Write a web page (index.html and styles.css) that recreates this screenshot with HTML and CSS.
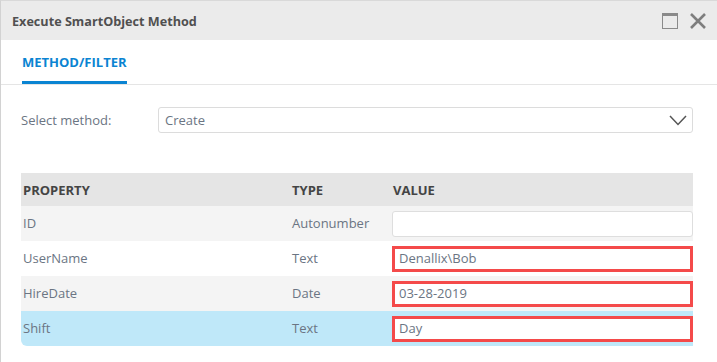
FILE: index.html
```html
<!DOCTYPE html>
<html lang="en">
<head>
    <meta charset="UTF-8">
    <title>Execute SmartObject Method</title>
    <link rel="stylesheet" href="styles.css">
</head>
<body>

    <div class="dialog">
        <div class="titlebar">
            <span class="title">Execute SmartObject Method</span>
            <div class="win-actions">
                <svg class="win-icon" width="18" height="18" viewBox="0 0 18 18">
                    <rect x="1.5" y="1.5" width="15" height="15" fill="none" stroke="#8a8a8a" stroke-width="1"/>
                    <rect x="1" y="1" width="16" height="3" fill="#8a8a8a"/>
                </svg>
                <svg class="win-icon" width="18" height="18" viewBox="0 0 18 18">
                    <path d="M2 2 L16 16 M16 2 L2 16" stroke="#7e7e7e" stroke-width="2.6" fill="none"/>
                </svg>
            </div>
        </div>

        <div class="tabs">
            <div class="tab active">METHOD/FILTER</div>
        </div>

        <div class="content">
            <div class="field-row">
                <label class="field-label">Select method:</label>
                <div class="select">
                    <span>Create</span>
                    <svg width="18" height="11" viewBox="0 0 18 11">
                        <path d="M1 1 L9 9.5 L17 1" stroke="#555" stroke-width="1.5" fill="none"/>
                    </svg>
                </div>
            </div>

            <table class="props">
                <tr>
                    <th class="col-prop">PROPERTY</th>
                    <th class="col-type">TYPE</th>
                    <th class="col-value">VALUE</th>
                </tr>
                <tr class="alt">
                    <td>ID</td>
                    <td>Autonumber</td>
                    <td><div class="input"></div></td>
                </tr>
                <tr>
                    <td>UserName</td>
                    <td>Text</td>
                    <td><div class="input marked">Denallix\Bob</div></td>
                </tr>
                <tr class="alt">
                    <td>HireDate</td>
                    <td>Date</td>
                    <td><div class="input marked">03-28-2019</div></td>
                </tr>
                <tr class="selected">
                    <td>Shift</td>
                    <td>Text</td>
                    <td><div class="input marked">Day</div></td>
                </tr>
            </table>
        </div>
    </div>

</body>
</html>
```

FILE: styles.css
```css
* {
    margin: 0;
    padding: 0;
    box-sizing: border-box;
}

body {
    font-family: "Open Sans", Arial, sans-serif;
    background-color: #fff;
    color: #6b7583;
    width: 717px;
    height: 362px;
    overflow: hidden;
}

.dialog {
    height: 362px;
    border-top: 1px solid #d9d9d9;
    border-left: 1px solid #d2d2d2;
    background-color: #fff;
}

/* Barra de título */
.titlebar {
    height: 39px;
    background-color: #ebebeb;
    display: flex;
    align-items: center;
    justify-content: space-between;
    padding-left: 11px;
    padding-right: 10px;
}

.title {
    font-size: 12.65px;
    font-weight: bold;
    color: #505050;
}

.win-actions {
    display: flex;
    gap: 10px;
    margin-top: 1px;
}

/* Abas */
.tabs {
    height: 45px;
    border-bottom: 1px solid #e5e5e5;
    padding-left: 21px;
    display: flex;
}

.tab {
    font-size: 13px;
    font-weight: bold;
    color: #0a84d2;
    padding-top: 13px;
    height: 44px;
    border-bottom: 3px solid #0a84d2;
}

.content {
    padding: 22px 24px 0 20px;
}

.field-row {
    display: flex;
    align-items: center;
}

.field-label {
    width: 137px;
    font-size: 13px;
    color: #6b7583;
}

.select {
    flex: 1;
    height: 26px;
    border: 1px solid #dcdcdc;
    border-radius: 3px;
    display: flex;
    align-items: center;
    justify-content: space-between;
    padding: 0 5px 0 6px;
    font-size: 13px;
    color: #6b7583;
}

/* Tabela de propriedades */
.props {
    width: 100%;
    margin-top: 40px;
    border-collapse: collapse;
    font-size: 13px;
}

.props th {
    height: 33px;
    background-color: #e5e5e5;
    color: #444;
    font-size: 13px;
    text-align: left;
    padding-left: 2px;
}

.props td {
    height: 35px;
    padding-left: 2px;
    padding-bottom: 2px;
}

.col-prop {
    width: 269px;
}

.col-type {
    width: 101px;
}

.props tr.alt td {
    background-color: #f4f4f4;
}

.props tr.selected td {
    background-color: #bfe8f9;
}

.props tr.selected td:first-child {
    border-bottom-left-radius: 6px;
}

.props td:last-child {
    padding-left: 0;
    padding-bottom: 0;
}

.input {
    height: 26px;
    margin-left: 1px;
    border: 1px solid #dedede;
    border-radius: 3px;
    background-color: #fff;
    padding-left: 5px;
    line-height: 22px;
    color: #6b7583;
}

.input.marked {
    border: 3px solid #f44a4a;
    border-radius: 0;
    line-height: 18px;
    padding-left: 4px;
}
```
